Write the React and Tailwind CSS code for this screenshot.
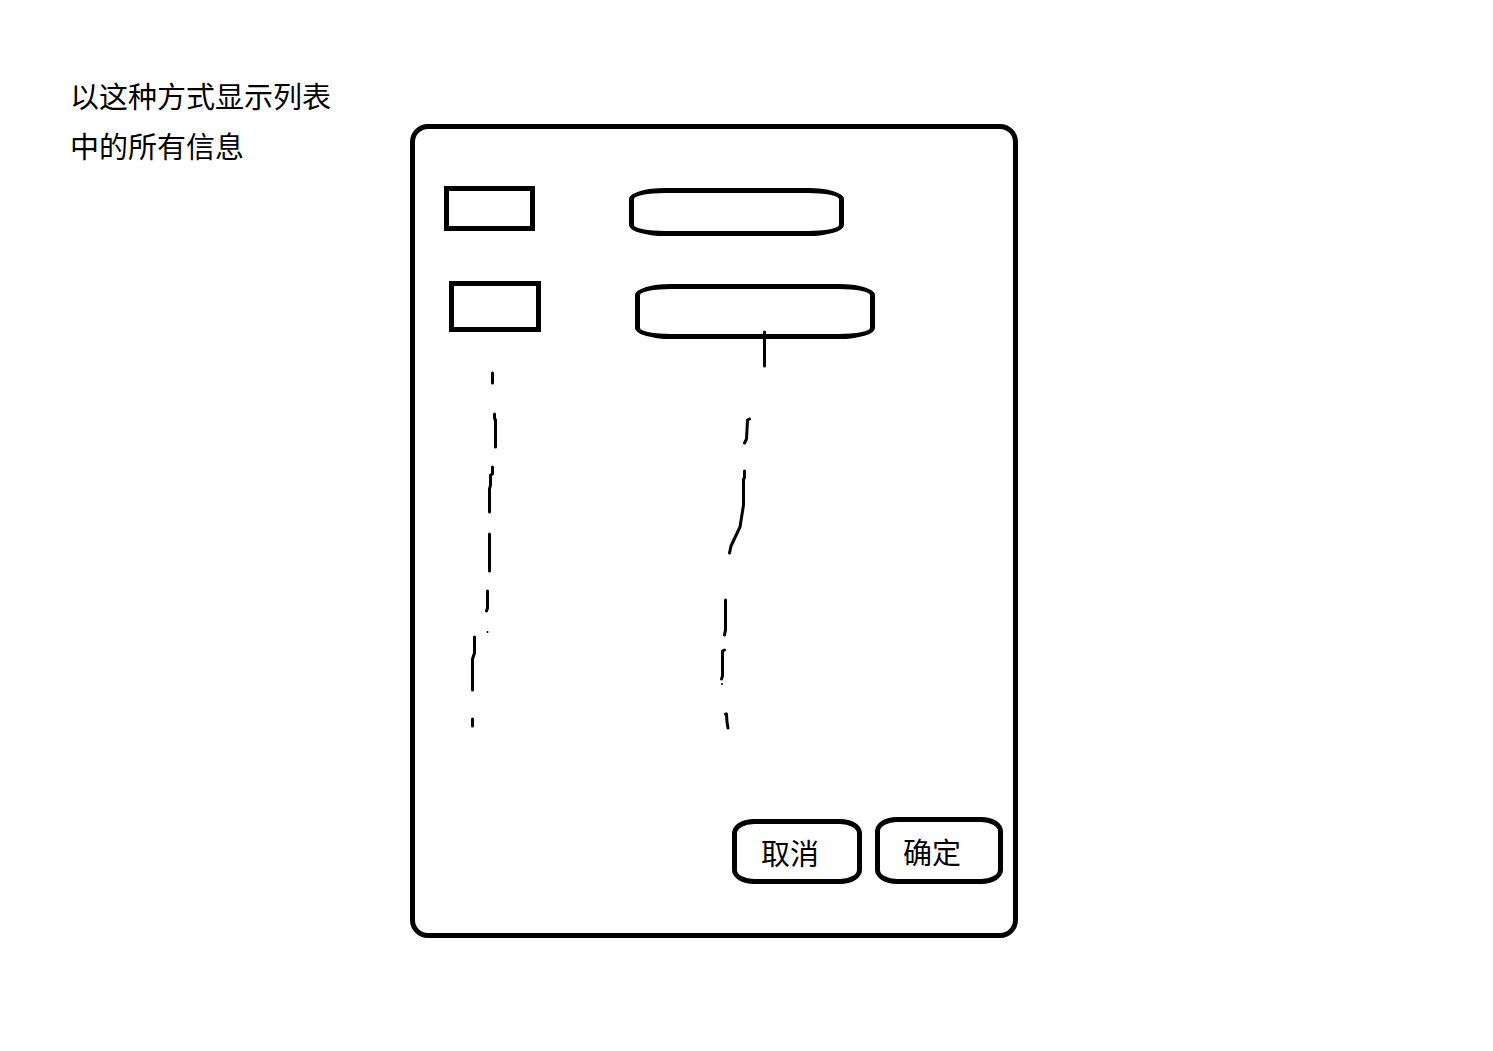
import React from "react";

const boxClass = "border-[5px] border-black";
const fieldClass =
  "border-[5px] border-black rounded-[36px/11px] bg-white px-4 text-2xl outline-none";
const buttonClass =
  "border-[5px] border-black rounded-[22px/14px] pr-3.5 text-[29px] leading-8 cursor-pointer";

// Hand-drawn strokes below the label boxes
const labelStrokes = [
  "M48.5 41V51",
  "M50.5 82V86L51.5 88V115",
  "M48.5 135V142L46.5 143V153L45.5 157V180",
  "M45.5 202V239",
  "M43.5 259V276L42.5 279",
  "M30.5 305V321L28.5 327V358",
  "M28.5 387V394",
];

// Hand-drawn strokes below the value fields
const fieldStrokes = [
  "M135.5 -7V27",
  "M120.5 80L118.5 81L117.5 100L115.5 104",
  "M115.5 132V139L114.5 140V166L111 188L102 207L100.5 214",
  "M96.5 261V291L95.5 296",
  "M95.5 311L93.5 312V337L92.5 340",
  "M96.5 375L97.5 375L98 383L99 389",
];

function Strokes({ paths, dot, className }) {
  return (
    <svg
      className={className}
      fill="none"
      stroke="black"
      strokeWidth="3"
      strokeLinecap="round"
      strokeLinejoin="round"
      aria-hidden="true"
    >
      {paths.map((d) => (
        <path key={d} d={d} />
      ))}
      <circle cx={dot[0]} cy={dot[1]} r="1" fill="black" stroke="none" />
    </svg>
  );
}

export default function App() {
  return (
    <main className="flex min-h-screen items-start bg-white pl-[70px] pr-6 pt-[70px] font-['Noto_Sans_CJK_SC',sans-serif] text-black">
      <p className="w-[340px] shrink-0 text-[29px] leading-[50px]">
        以这种方式显示列表
        <br />
        中的所有信息
      </p>

      <form
        className="mt-[54px] w-full max-w-[608px] rounded-[18px] border-[5px] border-black pb-[49px] pl-[29px] pr-2.5 pt-[57px]"
        onSubmit={(e) => e.preventDefault()}
      >
        <div className="flex gap-[88px]">
          <div className="flex w-[97px] flex-col">
            <label htmlFor="field-1" className={`${boxClass} h-[45px] w-[91px]`} />
            <label htmlFor="field-2" className={`${boxClass} mt-[50px] h-[51px] w-[92px] self-end`} />
            <Strokes
              paths={labelStrokes}
              dot={[43.5, 300]}
              className="h-[400px] w-full overflow-visible"
            />
          </div>
          <div className="flex w-[246px] flex-col pt-0.5">
            <input id="field-1" aria-label="信息一" className={`${fieldClass} h-12 w-[215px]`} />
            <input id="field-2" aria-label="信息二" className={`${fieldClass} mt-12 h-[55px] w-[240px] self-end`} />
            <Strokes
              paths={fieldStrokes}
              dot={[93, 345]}
              className="h-[390px] w-full overflow-visible"
            />
          </div>
        </div>

        <div className="mt-[85px] flex items-end justify-end gap-[13px]">
          <button type="button" className={`${buttonClass} h-[65px] w-[130px]`}>
            取消
          </button>
          <button type="submit" className={`${buttonClass} h-[67px] w-32`}>
            确定
          </button>
        </div>
      </form>
    </main>
  );
}
